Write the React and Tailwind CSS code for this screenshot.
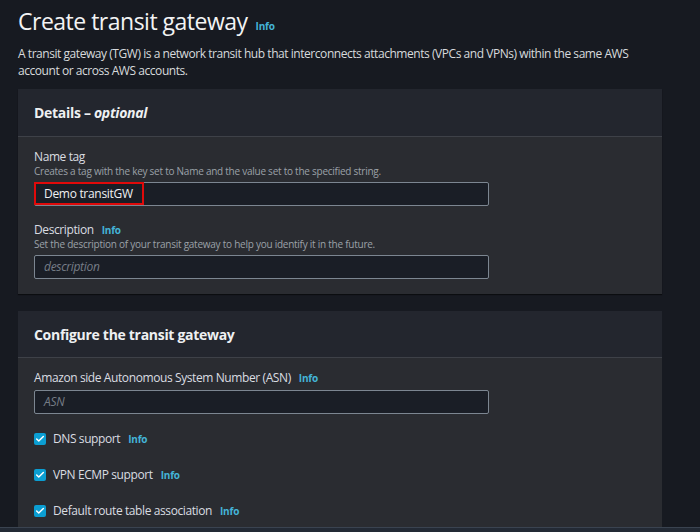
import { Check } from "lucide-react";

const font = { fontFamily: '"Open Sans", "Liberation Sans", sans-serif' };

function Info() {
  return <span className="text-[10px] font-bold tracking-[-0.2px] text-[#44b4d8] ml-[8px]">Info</span>;
}

function TextField({ value, placeholder, highlight }) {
  return (
    <div className="w-[455px] h-[24px] border border-[#7c8691] rounded-[2px] bg-[#1a1e26] flex items-center relative">
      {value ? (
        <span className="text-[12px] tracking-[-0.3px] text-[#eef0f2] pl-[9px]">{value}</span>
      ) : (
        <span className="text-[12px] tracking-[-0.3px] italic text-[#767d86] pl-[9px]">{placeholder}</span>
      )}
      {highlight && (
        <div className="absolute left-[-1px] top-[-1px] w-[110px] h-[23px] border-2 border-[#e00a0a]" />
      )}
    </div>
  );
}

function CheckRow({ label }) {
  return (
    <div className="h-[36px] flex items-center">
      <div className="w-[12px] h-[12px] rounded-[2px] bg-[#0b9ed2] flex items-center justify-center">
        <Check size={10} strokeWidth={3.5} color="#ffffff" />
      </div>
      <span className="text-[12px] tracking-[-0.4px] text-[#dadde1] ml-[7px]">{label}</span>
      <Info />
    </div>
  );
}

export default function App() {
  return (
    <div style={font} className="w-[700px] h-[532px] bg-[#171a21] overflow-hidden flex flex-col">
      <div className="flex-1 pl-[18px] w-[662px]">
        {/* title */}
        <div className="flex items-baseline pt-[4px] h-[45px]">
          <h1 className="text-[23px] leading-[34px] tracking-[-0.5px] text-[#f2f3f4]">Create transit gateway</h1>
          <Info />
        </div>
        <p className="text-[12px] leading-[17px] tracking-[-0.45px] text-[#d7dadd] w-[640px]">
          A transit gateway (TGW) is a network transit hub that interconnects attachments (VPCs and VPNs) within the same AWS
          account or across AWS accounts.
        </p>

        {/* details panel */}
        <div className="mt-[10px] w-[644px] bg-[#2a2c31] shadow-[0_1px_1px_rgba(0,0,0,0.5)]">
          <div className="h-[48px] bg-[#23262e] border-b border-[#3e4148] flex items-center px-[16px]">
            <h2 className="text-[14px] font-bold tracking-[-0.3px] text-[#eef0f2]">
              Details – <i>optional</i>
            </h2>
          </div>
          <div className="px-[16px] pt-[12px] pb-[15px]">
            <div className="text-[12px] leading-[16px] tracking-[-0.4px] text-[#dadde1]">Name tag</div>
            <div className="text-[10px] leading-[13px] tracking-[-0.25px] text-[#9ba1a8] mb-[4px]">
              Creates a tag with the key set to Name and the value set to the specified string.
            </div>
            <TextField value="Demo transitGW" highlight />
            <div className="mt-[16px] text-[12px] leading-[16px] tracking-[-0.4px] text-[#dadde1] flex items-baseline">
              Description
              <Info />
            </div>
            <div className="text-[10px] leading-[13px] tracking-[-0.25px] text-[#9ba1a8] mb-[4px]">
              Set the description of your transit gateway to help you identify it in the future.
            </div>
            <TextField placeholder="description" />
          </div>
        </div>

        {/* configure panel */}
        <div className="mt-[17px] w-[644px] h-[216px] bg-[#2a2c31]">
          <div className="h-[47px] bg-[#23262e] border-b border-[#3e4148] flex items-center px-[16px]">
            <h2 className="text-[14px] font-bold tracking-[-0.3px] text-[#eef0f2]">Configure the transit gateway</h2>
          </div>
          <div className="px-[16px] pt-[12px]">
            <div className="text-[12px] leading-[16px] tracking-[-0.4px] text-[#dadde1] mb-[4px] flex items-baseline">
              Amazon side Autonomous System Number (ASN)
              <Info />
            </div>
            <TextField placeholder="ASN" />
            <div className="mt-[7px]">
              <CheckRow label="DNS support" />
              <CheckRow label="VPN ECMP support" />
              <CheckRow label="Default route table association" />
            </div>
          </div>
        </div>
      </div>
      <div className="h-[5px] bg-[#232a35] border-t border-[#3a4350]" />
    </div>
  );
}
